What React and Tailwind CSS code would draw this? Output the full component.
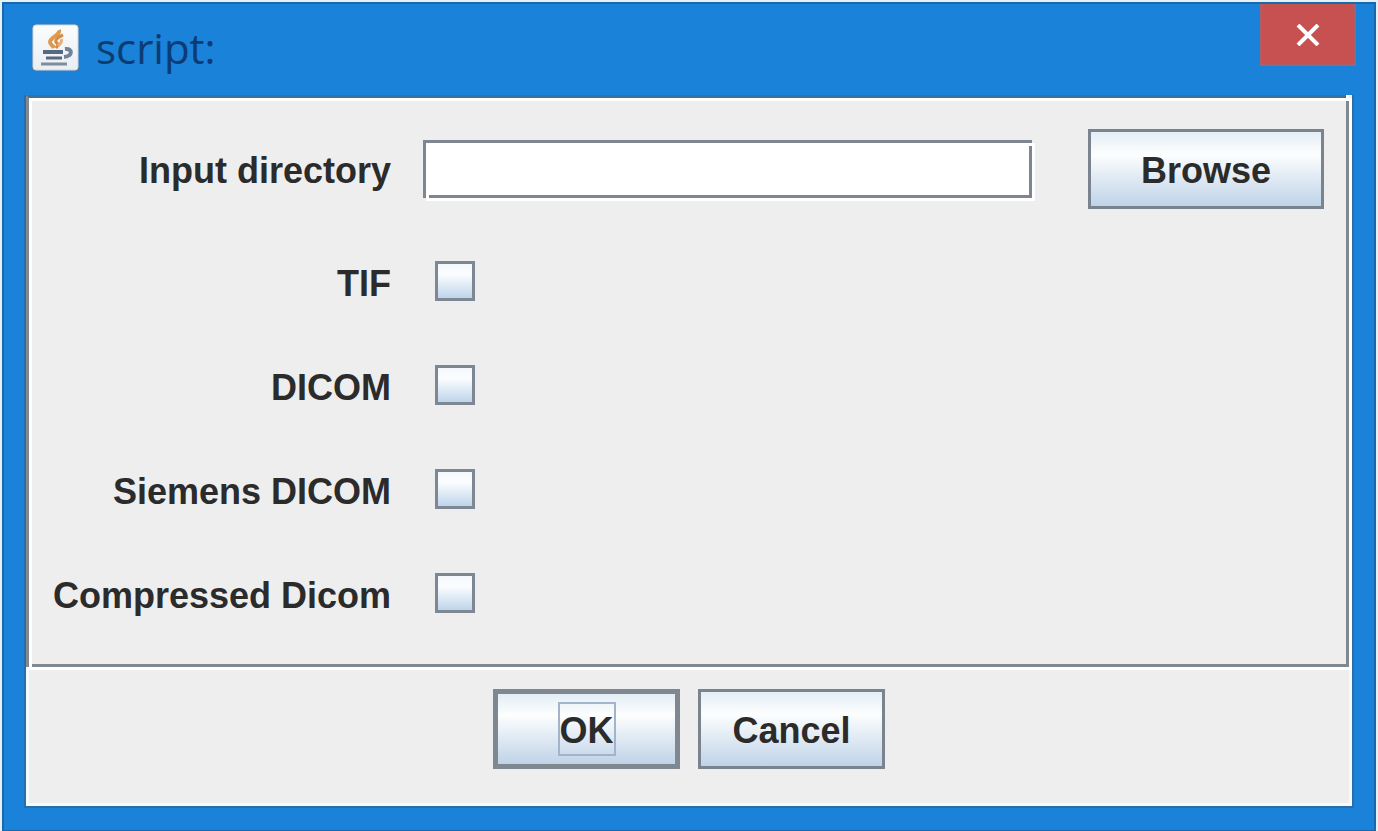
import { useState } from 'react';

const FORMATS = [
  { id: 'tif', label: 'TIF' },
  { id: 'dicom', label: 'DICOM' },
  { id: 'siemens', label: 'Siemens DICOM' },
  { id: 'compressed', label: 'Compressed Dicom' },
];

function JavaIcon() {
  return (
    <svg viewBox="0 0 48 48" className="w-12 h-12" aria-hidden="true">
      <defs>
        <linearGradient id="tile" x1="0" y1="0" x2="0" y2="1">
          <stop offset="0" stopColor="#fbfcfd" />
          <stop offset="1" stopColor="#e9eef3" />
        </linearGradient>
      </defs>
      <rect x="0" y="0" width="48" height="48" rx="4" fill="#3f79ac" />
      <rect x="1" y="1" width="45" height="45" rx="3" fill="url(#tile)" stroke="#c3dbef" strokeWidth="1" />
      <g fill="none">
        <path d="M27 6c2 5-9 7-9 12 0 3 3 3 4 6" stroke="#dd9a50" strokeWidth="4" />
        <path d="M31 11c-5 2-8 5-7 7s4 1 0 6" stroke="#d98a3c" strokeWidth="3" />
        <path d="M29 15c2 3-1 5-3 7" stroke="#e5b07a" strokeWidth="3" />
        <path d="M11 28h20" stroke="#56697f" strokeWidth="4" />
        <path d="M14 34h16" stroke="#56697f" strokeWidth="3" />
        <path d="M33 25c8-1 8 7-1 8" stroke="#71839a" strokeWidth="4" />
        <path d="M9 40h26" stroke="#7f8c9c" strokeWidth="3" />
      </g>
    </svg>
  );
}

function MetalButton({ children, className, ...props }) {
  return (
    <button
      type="button"
      className={`flex items-center justify-center h-20 bg-linear-to-b from-[#e3edf6] via-[#fdfefe] via-30% to-[#bfd3e8] ${className}`}
      {...props}
    >
      {children}
    </button>
  );
}

export default function App() {
  const [directory, setDirectory] = useState('');
  const [checked, setChecked] = useState({});

  const toggle = (id) => setChecked((prev) => ({ ...prev, [id]: !prev[id] }));

  return (
    <div className="min-h-screen flex flex-col bg-[#e4f1f9] p-0.5 font-['Liberation_Sans',Arial,sans-serif] text-[36px] leading-10 font-bold text-[#2b2b2b]">
      <div className="flex-1 flex flex-col bg-[#1a82d8] border-2 border-[#1a68ac] px-5 pb-[22px]">
        <header className="flex items-start justify-between h-[91px]">
          <div className="flex items-center gap-4 pt-4 pl-2">
            <JavaIcon />
            <h1 className="font-['Open_Sans','Noto_Sans',sans-serif] text-[42px] leading-[56px] font-normal text-[#0b3c73]">script:</h1>
          </div>
          <button
            type="button"
            aria-label="Close"
            className="flex items-center justify-center w-24 h-[62px] -mr-0.5 pt-0.5 bg-[#c75050] border-2 border-t-0 border-[#a8606f]"
          >
            <svg viewBox="0 0 24 22" className="w-6 h-[22px]" aria-hidden="true">
              <path d="M2 1l20 20M22 1L2 21" stroke="#fff" strokeWidth="4" fill="none" />
            </svg>
          </button>
        </header>

        <main className="flex-1 flex flex-col bg-[#eeeeee] border-2 border-[#2c6ca8] border-t-0">
          {/* etched frame: dark line with a white line offset down and right */}
          <section className="relative border-3 border-[#808890] border-t-[#3f709c] shadow-[inset_3px_3px_0_#fff,3px_3px_0_#fff] mr-[3px] pt-[31px] pb-[19px] px-[22px] before:absolute before:-top-[3px] before:-right-[3px] before:w-[3px] before:h-1.5 before:bg-white after:absolute after:-bottom-[3px] after:left-0 after:w-[3px] after:h-[3px] after:bg-white">
            <div className="grid grid-cols-[340px_1fr_auto] gap-x-8">
              <label htmlFor="directory" className="self-center text-right pt-1">Input directory</label>
              <div className="relative self-center mr-6 shadow-[3px_3px_0_#fff] before:absolute before:top-[3px] before:right-0 before:w-[3px] before:h-[3px] before:bg-white after:absolute after:bottom-0 after:left-[3px] after:w-[3px] after:h-[3px] after:bg-white">
                <input
                  id="directory"
                  type="text"
                  value={directory}
                  onChange={(e) => setDirectory(e.target.value)}
                  className="block w-full h-[58px] px-2 bg-white border-3 border-[#7f8690] font-normal outline-none"
                />
              </div>
              <MetalButton className="px-[50px] pt-1 border-3 border-[#7a838e]">Browse</MetalButton>
            </div>

            <div className="pt-5">
              {FORMATS.map((format) => (
                <div key={format.id} className="flex items-center gap-11 h-[104px]">
                  <label htmlFor={format.id} className="w-[340px] pt-1.5 text-right whitespace-nowrap">{format.label}</label>
                  <input
                    id={format.id}
                    type="checkbox"
                    checked={!!checked[format.id]}
                    onChange={() => toggle(format.id)}
                    className="appearance-none size-10 border-3 border-[#7d8894] bg-linear-to-b from-[#f4f8fc] via-[#fbfdff] via-30% to-[#bfd5ea] checked:to-[#7d9dbd]"
                  />
                </div>
              ))}
            </div>
          </section>

          <footer className="flex-1 flex items-start justify-center gap-[18px] pt-[22px] pb-[34px] border-3 border-t-0 border-[#f4fbfd]">
            <MetalButton className="w-[187px] border-5 border-[#7f8890]">
              <span className="flex items-center h-[54px] pt-1 border-2 border-[#a3b4c8]">OK</span>
            </MetalButton>
            <MetalButton className="w-[187px] pt-1 border-3 border-[#7a838e]">Cancel</MetalButton>
          </footer>
        </main>
      </div>
    </div>
  );
}
